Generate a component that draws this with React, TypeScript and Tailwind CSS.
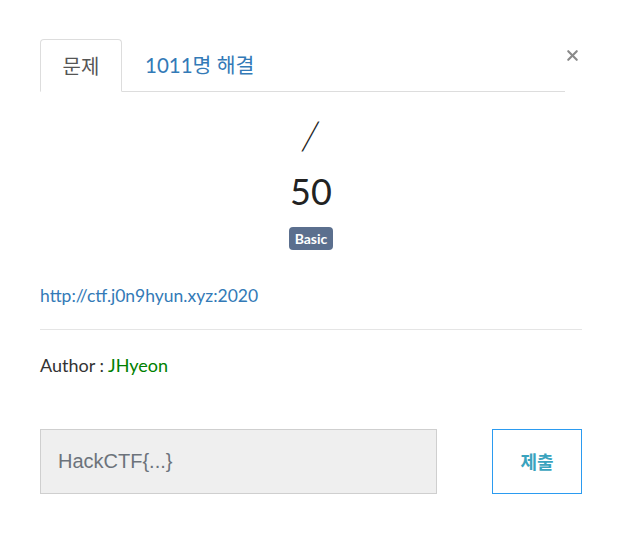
import { X } from 'lucide-react'

export default function App() {
  return (
    <div className="min-h-[555px] w-[622px] bg-white font-['Lato','Noto_Sans_CJK_KR',sans-serif] text-[#333]">
      <div className="relative px-10 pt-[39px]">
        <button className="absolute right-[41px] top-[47px] text-[#8a8a8a]" aria-label="close">
          <X size={17} strokeWidth={3} />
        </button>

        <div className="mr-[17px] flex border-b border-[#ddd]">
          <div className="-mb-px flex h-[53px] w-[82px] items-center justify-center rounded-t border border-[#ddd] border-b-white bg-white text-[20px] text-[#555]">
            문제
          </div>
          <div className="flex h-[52px] items-center pl-[23px] text-[20.5px] text-[#337ab7]">1011명 해결</div>
        </div>

        <div className="flex flex-col items-center">
          <div className="mt-[20px] -skew-x-12 font-['Noto_Sans_CJK_KR',sans-serif] text-[31px] font-light leading-[42px] text-[#222]">/</div>
          <div className="mt-[15px] text-[36px] leading-[44px] text-[#222]">50</div>
          <span className="mt-[14px] rounded bg-[#5b6f8e] px-[6px] py-[2px] text-[14px] font-bold leading-[19px] text-white">
            Basic
          </span>
        </div>

        <div className="mt-[35px] text-[17.5px] leading-[22px] text-[#337ab7]">http://ctf.j0n9hyun.xyz:2020</div>
        <hr className="mt-[22px] border-[#e5e5e5]" />
        <div className="mt-[24px] text-[18px] leading-[22px]">
          Author : <span className="text-[#008000]">JHyeon</span>
        </div>

        <div className="mt-[53px] flex items-stretch justify-between">
          <input
            className="h-[65px] w-[397px] border border-[#cfcfcf] bg-[#efefef] px-[17px] font-['Liberation_Sans',sans-serif] text-[20px] text-[#555] outline-none placeholder:text-[#6c737b]"
            placeholder="HackCTF{...}"
          />
          <button className="h-[65px] w-[90px] border border-[#2b9bf0] bg-white font-['Noto_Sans_CJK_KR',sans-serif] text-[18px] font-bold text-[#3aa3be]">
            제출
          </button>
        </div>
      </div>
    </div>
  )
}
